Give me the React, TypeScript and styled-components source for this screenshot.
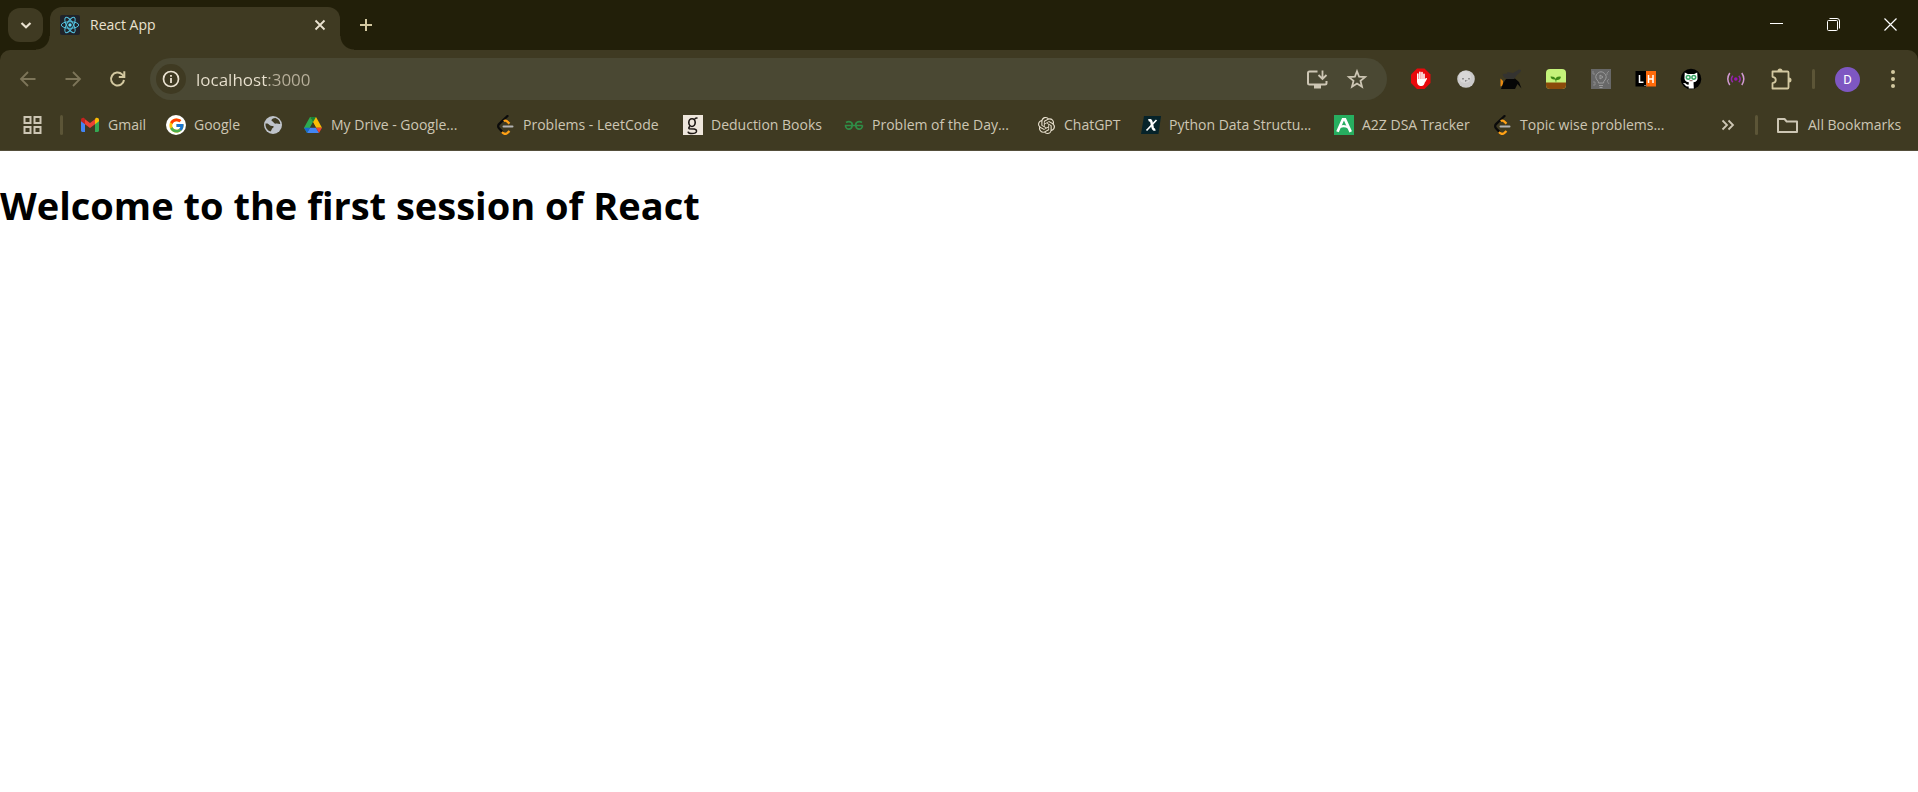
import React from "react";
import styled, { createGlobalStyle } from "styled-components";
import { SiOpenai } from "react-icons/si";
import { FcGoogle } from "react-icons/fc";

const color = {
  strip: "#221f09",
  bar: "#3f3a22",
  field: "#4a4833",
  line: "#5c5537",
  cream: "#d3c8a0",
  text: "#cdc6b4",
  bright: "#eae2d0",
  dim: "#7d7559",
};

const GlobalStyle = createGlobalStyle`
  *, *::before, *::after { box-sizing: border-box; }
  body { margin: 0; background: #fff; font-family: "Open Sans", "Segoe UI", sans-serif; }
  button { border: 0; padding: 0; background: none; color: inherit; font: inherit; }
  a { color: inherit; text-decoration: none; }
  svg { display: block; flex: none; }
`;

const Chrome = styled.header`
  background: ${color.strip};
  color: ${color.text};
`;

const TabStrip = styled.div`
  display: flex;
  height: 50px;
  padding-left: 8px;
`;

const TabSearch = styled.button`
  display: grid;
  place-items: center;
  width: 35px;
  height: 34px;
  margin: 8px 7px 0 0;
  border-radius: 12px;
  background: ${color.bar};
  color: ${color.bright};
`;

const Tab = styled.div`
  position: relative;
  display: flex;
  align-items: center;
  width: 290px;
  height: 43px;
  margin-top: 7px;
  padding: 0 10px 7px;
  border-radius: 12px 12px 0 0;
  background: ${color.bar};
  color: ${color.bright};
  font-size: 14px;

  &::before,
  &::after {
    content: "";
    position: absolute;
    bottom: 0;
    width: 14px;
    height: 14px;
  }
  &::before {
    right: 100%;
    background: radial-gradient(circle at 0 0, transparent 13px, ${color.bar} 14px);
  }
  &::after {
    left: 100%;
    background: radial-gradient(circle at 100% 0, transparent 13px, ${color.bar} 14px);
  }
`;

const TabTitle = styled.span`
  flex: 1;
  margin-left: 10px;
  line-height: 20px;
`;

const SmallButton = styled.button`
  display: grid;
  place-items: center;
  width: 20px;
  height: 20px;
`;

const NewTab = styled.button`
  display: grid;
  place-items: center;
  width: 36px;
  height: 50px;
  margin-left: 8px;
  color: ${color.cream};
`;

const WindowControls = styled.div`
  display: flex;
  margin-left: auto;
  color: #fff;
`;

const WindowButton = styled.button`
  display: grid;
  place-items: center;
  width: 57px;
  height: 48px;
`;

const Panel = styled.div`
  border-radius: 10px 10px 0 0;
  border-bottom: 1px solid #544e3a;
  background: ${color.bar};
`;

const Toolbar = styled.div`
  display: flex;
  align-items: center;
  height: 50px;
  padding: 8px 3px 0 5px;
`;

const ToolButton = styled.button<{ $tone?: string }>`
  display: grid;
  flex: none;
  place-items: center;
  width: 45px;
  height: 42px;
  color: ${(p) => p.$tone ?? color.cream};
`;

const AddressBar = styled.div`
  display: flex;
  flex: 1;
  align-items: center;
  min-width: 0;
  height: 42px;
  margin: 0 11px 0 10px;
  padding: 0 10px 0 6px;
  border-radius: 21px;
  background: ${color.field};
`;

const SiteInfo = styled.button`
  display: grid;
  flex: none;
  place-items: center;
  width: 30px;
  height: 30px;
  border-radius: 50%;
  background: ${color.bar};
  color: ${color.bright};
`;

const AddressInput = styled.input`
  flex: 1;
  min-width: 0;
  height: 30px;
  margin-left: 10px;
  padding: 0;
  border: 0;
  outline: 0;
  background: linear-gradient(90deg, ${color.bright} 71px, #b9b19c 71px);
  background-clip: text;
  -webkit-background-clip: text;
  color: transparent;
  font-family: inherit;
  font-size: 17px;
`;

const FieldButton = styled.button`
  display: grid;
  flex: none;
  place-items: center;
  width: 40px;
  height: 34px;
  color: ${color.text};
`;

const Divider = styled.span<{ $before: number; $after: number }>`
  flex: none;
  width: 3px;
  height: 20px;
  margin: 0 ${(p) => p.$after}px 0 ${(p) => p.$before}px;
  border-radius: 2px;
  background: ${color.line};
`;

const Avatar = styled.span`
  display: grid;
  place-items: center;
  width: 25px;
  height: 25px;
  border-radius: 50%;
  background: #7e57c2;
  color: #fff;
  font-family: Roboto, sans-serif;
  font-size: 13px;
`;

const BookmarkBar = styled.nav`
  display: flex;
  align-items: center;
  height: 50px;
  padding: 0 6px 0 16px;
  font-size: 14px;
  line-height: 20px;
  white-space: nowrap;
`;

const BarButton = styled.button`
  display: grid;
  flex: none;
  place-items: center;
  width: 33px;
  height: 32px;
`;

const BookmarkList = styled.div`
  display: flex;
  flex: 1;
  min-width: 0;
  overflow: hidden;
`;

const Bookmark = styled.a`
  display: flex;
  flex: none;
  align-items: center;
  gap: 8px;
  height: 32px;
  padding: 0 10px;
`;

const Label = styled.span<{ $width?: number }>`
  width: ${(p) => (p.$width ? `${p.$width}px` : "auto")};
`;

const RoundIcon = styled.span<{ $fill?: string }>`
  display: grid;
  place-items: center;
  width: 20px;
  height: 20px;
  border-radius: 50%;
  background: ${(p) => p.$fill ?? "transparent"};
  color: ${color.bright};
`;

const Page = styled.main`
  overflow: hidden;
  background: #fff;
`;

const Heading = styled.h1`
  margin: 28px 0;
  color: #000;
  font-size: 38px;
  font-weight: 700;
  line-height: 53px;
`;

const Icon = ({ size = 20, children }: { size?: number; children: React.ReactNode }) => (
  <svg width={size} height={size} viewBox={`0 0 ${size} ${size}`} fill="none" aria-hidden="true">
    {children}
  </svg>
);

const ReactLogo = () => (
  <Icon>
    <rect width="20" height="20" rx="2" fill="#20232a" />
    <g stroke="#53c1de" strokeWidth="1">
      <ellipse cx="10" cy="10" rx="8.7" ry="3.3" />
      <ellipse cx="10" cy="10" rx="8.7" ry="3.3" transform="rotate(60 10 10)" />
      <ellipse cx="10" cy="10" rx="8.7" ry="3.3" transform="rotate(120 10 10)" />
    </g>
    <circle cx="10" cy="10" r="1.7" fill="#61dafb" />
  </Icon>
);

const Gmail = () => (
  <Icon>
    <path d="M1 5v10.500c0 .8.6 1.400 1.400 1.400H5V8.500L1 5.500z" fill="#4285f4" />
    <path d="M15 8.500v8.400h2.600c.8 0 1.400-.6 1.400-1.400V5.500z" fill="#34a853" />
    <path d="M15 4.300v5L19 6.300V4.900c0-1.900-2.100-2.700-3.500-1.600z" fill="#fbbc04" />
    <path d="M5 9.300v-5l5 3.800 5-3.800v5l-5 3.800z" fill="#ea4335" />
    <path d="M1 4.900v1.400l4 3v-5l-.5-1C3.100 2.200 1 3 1 4.900z" fill="#c5221f" />
  </Icon>
);

const Globe = () => (
  <Icon>
    <circle cx="10" cy="10" r="9" fill="#bfc3ca" />
    <path d="M2.500 8.500c2-.3 3.200.2 4 1.600.6 1 2.200.8 3.500 1 1 .2.700 1.600-.2 2-1.200.500-1 2.200-2.300 3.400C4.300 15.500 2.200 12.500 2.500 8.500z" fill={color.bar} />
    <path d="M12.500 3c-2.500.2-4 1-4 2.300 0 1.200 1.600 1 2 2 .4 1.100 1.500 1.600 3 1.300 1.300-.2 2.300.6 3.800.4C17 6.200 15.200 3.800 12.500 3z" fill={color.bar} />
  </Icon>
);

const Drive = () => (
  <Icon>
    <path d="M7 2h6l6 10.700h-6z" fill="#fbbc04" />
    <path d="M7 2h6l-3 5.300z" fill="#188038" />
    <path d="M7 2l3 5.300L7 12.700 4 18l-3-5.300z" fill="#2da94f" />
    <path d="M10 7.300l3 5.400H7z" fill={color.bar} />
    <path d="M4 18l3-5.300h6L16 18z" fill="#4285f4" />
    <path d="M1 12.700h6L4 18z" fill="#1967d2" />
    <path d="M13 12.700h6L16 18z" fill="#ea4335" />
  </Icon>
);

const LeetCode = () => (
  <Icon>
    <path d="M12.500 1L4 9.200a2.800 2.800 0 0 0 0 4L7.500 17" stroke="#0b0b0b" strokeWidth="2.300" strokeLinecap="round" />
    <path d="M8.800 6.200q1.600-1.200 3 0L14.500 8.600" stroke="#ffa116" strokeWidth="2.300" />
    <path d="M7 17l1.200 1.200q2 1.500 4 0L14.500 16" stroke="#ffa116" strokeWidth="2.300" />
    <path d="M8.500 11.500h9" stroke="#b3b3b3" strokeWidth="2" strokeLinecap="round" />
  </Icon>
);

const Goodreads = () => (
  <Icon>
    <rect width="20" height="20" fill="#eee6dc" />
    <ellipse cx="9" cy="7.600" rx="3.200" ry="3.900" stroke="#1b1512" strokeWidth="1.600" />
    <path d="M11.500 4.500q1-2 3-1.300" stroke="#1b1512" strokeWidth="1.500" />
    <path d="M7 11.500q-2 1.200-.8 2.200l5 .4q2.500.4 2.300 2.300-.5 2.200-4.500 2.200-3.800 0-3.900-2" stroke="#1b1512" strokeWidth="1.500" />
  </Icon>
);

const Geeks = () => (
  <Icon>
    <g stroke="#2f8d46" strokeWidth="1.700">
      <path d="M2 7.400q3-1.600 5.500.2 1.700 2.300 0 5.200-2.400 2.200-4.800.6Q1.300 12.300 1.600 10.500H18.600" />
      <path d="M18 7.400q-3-1.600-5.500.2-1.700 2.300 0 5.200 2.400 2.200 4.800.6 1.400-1.100 1.100-2.900" />
    </g>
  </Icon>
);

const Scholar = () => (
  <Icon>
    <path d="M3 1h17l-2.500 18H0z" fill="#06232a" />
    <path d="M7.500 5.500q2.200-1 2.800 1l1.500 6.500q.6 2 2.500 1.300" stroke="#fff" strokeWidth="2.500" />
    <path d="M15.500 5L5.500 15.500" stroke="#fff" strokeWidth="1.700" />
  </Icon>
);

const Striver = () => (
  <Icon>
    <rect width="20" height="20" fill="#27ae60" />
    <path d="M3.500 16.800L9 4.300h2l5.700 12.500" stroke="#fff" strokeWidth="2.800" />
    <path d="M6 12q4-2 8.500.5" stroke="#fff" strokeWidth="2.200" />
  </Icon>
);

const AdBlock = () => (
  <Icon size={22}>
    <path d="M7 .5h7.500l6 6V15l-6 6H7l-6-6V6.500z" fill="#e8090c" />
    <g stroke="#fff" strokeWidth="1.600" strokeLinecap="round">
      <path d="M7.800 12V6M9.900 11V4.200M12 11V4.600M14 12V6.300M14.500 13.500l1.700-2.700" />
    </g>
    <path d="M7 11h7.800l.3 2.500q-1 4.500-3.500 4.500h-1.400q-2.700-.5-3.200-4z" fill="#fff" />
  </Icon>
);

const Seal = () => (
  <Icon size={18}>
    <circle cx="9" cy="9" r="8.800" fill="#cbcaca" />
    <circle cx="8" cy="7" r="6" fill="#d8d7d7" />
    <path d="M6 8v1.500M12 8v1.500M8.200 10.500l.8.800.8-.8" stroke="#4a4a4a" />
  </Icon>
);

const Box = () => (
  <Icon size={22}>
    <path d="M.5 10.500L3 13v4.500l-2.500 1z" fill="#e78a12" />
    <path d="M3 15.500L6 11l9-.5 4 3.500 2.500 6.500-4-4.500L15 21H1z" fill="#060606" />
    <path d="M2.500 6l5-.5-.5-1.500 6 1 6-3.500 2 .5-.5 2-3.500 3-3 4H7.500L4 9.500z" fill="#343330" />
  </Icon>
);

const Sprout = () => (
  <Icon size={22}>
    <rect x="1" y="1" width="20" height="20" rx="4" fill="#c4f27a" />
    <path d="M1 14.500h20V17a4 4 0 0 1-4 4H5a4 4 0 0 1-4-4z" fill="#8b4a0b" />
    <path d="M11 15q-.5-3-1-3.500-4 .5-4.500-3 4-.5 5 2.300 1-2.800 5.500-2-.8 3.700-4.500 3.200z" fill="#3d8a16" />
  </Icon>
);

const Bulb = () => (
  <Icon size={22}>
    <rect x="1" y="1" width="20" height="20" fill="#686868" />
    <path d="M8.500 15q0-1.800-1.500-3a5 5 0 1 1 8 0q-1.500 1.200-1.500 3zM9 17.500h4M9.500 19.500h3" stroke="#9b9b9b" />
    <path d="M10 7l3 2-3 2z" stroke="#9b9b9b" />
    <path d="M3 3v3h2M3 14h2v3H3M19 3l-2 2v2M19 11l-2 2 2 3" stroke="#8a8a8a" />
  </Icon>
);

const LeetHub = () => (
  <Icon size={22}>
    <rect x=".5" y="3" width="10.500" height="15.500" fill="#000" />
    <rect x="11" y="3" width="10" height="15.500" fill="#ff6a0a" />
    <path d="M4.500 7v7.300H8.500M13.500 7v8M18 7v8M13.500 11H18" stroke="#fff" strokeWidth="1.500" />
    <path d="M9 17.500h3" stroke="#777" />
  </Icon>
);

const GitCat = () => (
  <Icon size={22}>
    <circle cx="11" cy="11" r="10.300" fill="#000" />
    <path d="M4.800 4.500l3 1.500h6.400l3-1.500.3 4.500q.8 4.500-4 5.300l.3 6.200H8.700v-2q-2.900.3-3.700-1.500l-2-2 2.500.3q1.300 2 3.200 1.300l.1-2.300q-5-.8-4.300-5.300z" fill="#fff" />
    <circle cx="8.200" cy="9.300" r="1.900" stroke="#3aa566" strokeWidth="1.500" />
    <circle cx="13.800" cy="9.300" r="1.900" stroke="#3aa566" strokeWidth="1.500" />
    <path d="M9.500 12.700h3" stroke="#8a5a55" />
  </Icon>
);

const Broadcast = () => (
  <Icon size={22}>
    <circle cx="10.800" cy="11" r="1.800" fill="#9a13b5" />
    <path d="M7.800 7.700q-2.800 3.300 0 6.600M13.800 7.700q2.800 3.300 0 6.600" stroke="#9526ad" strokeWidth="1.500" />
    <path d="M4.800 5q-4 6 0 12M16.800 5q4 6 0 12" stroke="#d29ad3" strokeWidth="1.500" />
  </Icon>
);

const Puzzle = () => (
  <Icon size={22}>
    <path
      d="M2.500 3.500h15a1 1 0 0 1 1 1v15a1 1 0 0 1-1 1h-15v-5.300q3.300-.5 3.300-3.200T2.500 8.800z"
      stroke="currentColor"
      strokeWidth="1.800"
      strokeLinejoin="round"
    />
    <path d="M7.500 3a2.500 2.500 0 0 1 5 0M19 9.500a2.500 2.500 0 0 1 0 5" fill="currentColor" />
  </Icon>
);

const bookmarks: { name: string; icon: React.ReactNode; width?: number }[] = [
  { name: "Gmail", icon: <Gmail />, width: 38 },
  {
    name: "Google",
    icon: (
      <RoundIcon $fill="#fff">
        <FcGoogle size={17} />
      </RoundIcon>
    ),
    width: 49,
  },
  { name: "", icon: <Globe /> },
  { name: "My Drive - Google...", icon: <Drive />, width: 144 },
  { name: "Problems - LeetCode", icon: <LeetCode />, width: 140 },
  { name: "Deduction Books", icon: <Goodreads />, width: 113 },
  { name: "Problem of the Day...", icon: <Geeks />, width: 144 },
  {
    name: "ChatGPT",
    icon: (
      <RoundIcon>
        <SiOpenai size={17} />
      </RoundIcon>
    ),
    width: 57,
  },
  { name: "Python Data Structu...", icon: <Scholar />, width: 145 },
  { name: "A2Z DSA Tracker", icon: <Striver />, width: 110 },
  { name: "Topic wise problems...", icon: <LeetCode />, width: 145 },
];

const extensions = [
  { name: "Ad blocker", icon: <AdBlock /> },
  { name: "Seal", icon: <Seal /> },
  { name: "Box", icon: <Box /> },
  { name: "Sprout", icon: <Sprout /> },
  { name: "Ideas", icon: <Bulb /> },
  { name: "LeetHub", icon: <LeetHub /> },
  { name: "Code cat", icon: <GitCat /> },
  { name: "Broadcast", icon: <Broadcast /> },
  { name: "Extensions", icon: <Puzzle /> },
];

export default function App() {
  return (
    <>
      <GlobalStyle />
      <Chrome>
        <TabStrip>
          <TabSearch aria-label="Search tabs">
            <Icon>
              <path d="M5.500 8L10 12.200 14.500 8" stroke="currentColor" strokeWidth="2.200" />
            </Icon>
          </TabSearch>
          <Tab>
            <ReactLogo />
            <TabTitle>React App</TabTitle>
            <SmallButton aria-label="Close tab">
              <Icon>
                <path d="M5.500 5.500l9 9M14.500 5.500l-9 9" stroke="currentColor" strokeWidth="1.800" />
              </Icon>
            </SmallButton>
          </Tab>
          <NewTab aria-label="New tab">
            <Icon>
              <path d="M10 4v12M4 10h12" stroke="currentColor" strokeWidth="2" />
            </Icon>
          </NewTab>
          <WindowControls>
            <WindowButton aria-label="Minimize">
              <Icon>
                <path d="M4 9.500h13" stroke="currentColor" />
              </Icon>
            </WindowButton>
            <WindowButton aria-label="Restore">
              <Icon>
                <rect x="4.500" y="6.500" width="10" height="10" rx="1" stroke="currentColor" />
                <path d="M6.500 4.500H14a2.500 2.500 0 0 1 2.500 2.500v7.500" stroke="currentColor" />
              </Icon>
            </WindowButton>
            <WindowButton aria-label="Close">
              <Icon>
                <path d="M4.500 4.500l12 12M16.500 4.500l-12 12" stroke="currentColor" strokeWidth="1.200" />
              </Icon>
            </WindowButton>
          </WindowControls>
        </TabStrip>

        <Panel>
          <Toolbar>
            <ToolButton $tone={color.dim} aria-label="Back">
              <Icon>
                <path d="M17.500 10H4M10 3L3 10l7 7" stroke="currentColor" strokeWidth="1.800" />
              </Icon>
            </ToolButton>
            <ToolButton $tone={color.dim} aria-label="Forward">
              <Icon>
                <path d="M2.500 10H16M10 3l7 7-7 7" stroke="currentColor" strokeWidth="1.800" />
              </Icon>
            </ToolButton>
            <ToolButton aria-label="Reload">
              <Icon>
                <path d="M16 11a6.500 6.500 0 1 1-1.900-5.600L16 7.300" stroke="currentColor" strokeWidth="2" />
                <path d="M16.300 2.300v5.700h-5.500" stroke="currentColor" strokeWidth="2" />
              </Icon>
            </ToolButton>
            <AddressBar>
              <SiteInfo aria-label="View site information">
                <Icon>
                  <circle cx="10" cy="10" r="7.500" stroke="currentColor" strokeWidth="1.700" />
                  <path d="M10 9v5M10 6v1.700" stroke="currentColor" strokeWidth="1.800" />
                </Icon>
              </SiteInfo>
              <AddressInput aria-label="Address and search bar" defaultValue="localhost:3000" spellCheck={false} />
              <FieldButton aria-label="Install app">
                <Icon size={22}>
                  <path d="M11.500 3.500H3.500a1.500 1.500 0 0 0-1.500 1.500v10a1.500 1.500 0 0 0 1.500 1.500h15.500a1.500 1.500 0 0 0 1.500-1.500v-2" stroke="currentColor" strokeWidth="2" />
                  <path d="M8 17h7v3.500H8z" fill="currentColor" />
                  <path d="M16.500 2.500v8M12.500 7l4 4 4-4" stroke="currentColor" strokeWidth="1.800" />
                </Icon>
              </FieldButton>
              <FieldButton aria-label="Bookmark this tab">
                <Icon size={22}>
                  <path d="M11 3.200l2.100 5.500 6 .4-4.600 3.800 1.500 5.800-5-3.200-5 3.200 1.500-5.800-4.600-3.800 6-.4z" stroke="currentColor" strokeWidth="1.800" />
                </Icon>
              </FieldButton>
            </AddressBar>
            {extensions.map((e) => (
              <ToolButton key={e.name} aria-label={e.name}>
                {e.icon}
              </ToolButton>
            ))}
            <Divider $before={9} $after={10} />
            <ToolButton aria-label="Profile">
              <Avatar>D</Avatar>
            </ToolButton>
            <ToolButton aria-label="Menu">
              <Icon>
                <g fill="currentColor">
                  <circle cx="10" cy="3" r="2" />
                  <circle cx="10" cy="10" r="2" />
                  <circle cx="10" cy="17" r="2" />
                </g>
              </Icon>
            </ToolButton>
          </Toolbar>

          <BookmarkBar aria-label="Bookmarks">
            <BarButton aria-label="Apps">
              <Icon>
                <path d="M1.500 2h6v6h-6zM11.500 2h6v6h-6zM1.500 12h6v6h-6zM11.500 12h6v6h-6z" stroke="currentColor" strokeWidth="2" />
              </Icon>
            </BarButton>
            <Divider $before={11} $after={7} />
            <BookmarkList>
              {bookmarks.map((b) => (
                <Bookmark key={b.name} href="#" aria-label={b.name || "Untitled bookmark"}>
                  {b.icon}
                  {b.name && <Label $width={b.width}>{b.name}</Label>}
                </Bookmark>
              ))}
            </BookmarkList>
            <BarButton aria-label="More bookmarks">
              <Icon>
                <path d="M4.500 5.500L9 10l-4.500 4.500M10.500 5.500L15 10l-4.500 4.500" stroke="currentColor" strokeWidth="1.800" />
              </Icon>
            </BarButton>
            <Divider $before={11} $after={8} />
            <Bookmark href="#">
              <Icon size={24}>
                <path d="M2 6h6.500l2.200 2.500H21V19H2z" stroke="currentColor" strokeWidth="2" strokeLinejoin="round" />
              </Icon>
              <Label $width={94}>All Bookmarks</Label>
            </Bookmark>
          </BookmarkBar>
        </Panel>
      </Chrome>
      <Page>
        <Heading>Welcome to the first session of React</Heading>
      </Page>
    </>
  );
}
